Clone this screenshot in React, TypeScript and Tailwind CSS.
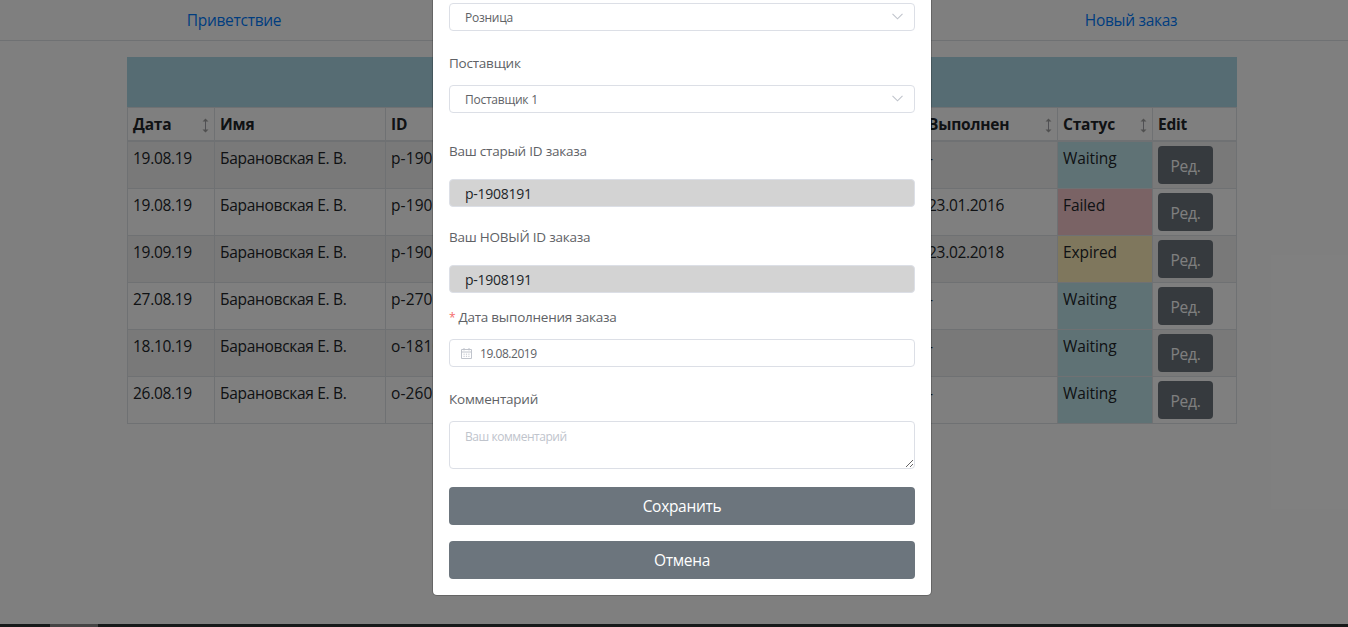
import React from "react";

type Status = "Waiting" | "Failed" | "Expired";

interface Order {
  date: string;
  id: string;
  done: string;
  status: Status;
}

const orders: Order[] = [
  { date: "19.08.19", id: "р-1908191", done: "-", status: "Waiting" },
  { date: "19.08.19", id: "р-1908192", done: "23.01.2016", status: "Failed" },
  { date: "19.09.19", id: "р-1909191", done: "23.02.2018", status: "Expired" },
  { date: "27.08.19", id: "р-2708191", done: "-", status: "Waiting" },
  { date: "18.10.19", id: "о-1810191", done: "-", status: "Waiting" },
  { date: "26.08.19", id: "о-2608191", done: "-", status: "Waiting" },
];

const statusColor: Record<Status, string> = {
  Waiting: "bg-[#bee5eb]",
  Failed: "bg-[#f5c6cb]",
  Expired: "bg-[#ffeeba]",
};

const columns = "grid grid-cols-[87px_171px_537px_135px_95px_84px] border-l border-[#dee2e6]";
const headCell = "flex items-center justify-between border-r border-b-2 border-[#dee2e6] pl-[5px] pr-[5px] font-bold tracking-[-0.2px]";
const cell = "border-r border-b border-[#dee2e6] pl-[5px] pt-1";

function SortIcon() {
  return (
    <svg className="mt-[3px] h-[15px] w-[7px]" viewBox="0 0 7 15" fill="none" stroke="#a0a0a8" strokeWidth="1">
      <path d="M3.5 1v13" />
      <path d="M3.5 .5 6.5 3.5H.5zM3.5 14.5 6.5 11.5H.5z" fill="#a0a0a0" stroke="none" />
    </svg>
  );
}

function OrdersTable() {
  return (
    <div className="mt-4 ml-[127px] w-[1110px]">
      <div className="h-[50px] bg-[#add8e6]" />
      <div className={columns + " h-[35px] border-t"}>
        <div className={headCell}>Дата<SortIcon /></div>
        <div className={headCell}>Имя</div>
        <div className={headCell}>ID</div>
        <div className={headCell}>Выполнен<SortIcon /></div>
        <div className={headCell}>Статус<SortIcon /></div>
        <div className={headCell}>Edit</div>
      </div>
      {orders.map((order, index) => (
        <div key={order.id} className={columns + " h-[47px] " + (index % 2 === 0 ? "bg-[#f2f2f2]" : "bg-white")}>
          <div className={cell}>{order.date}</div>
          <div className={cell}>Барановская Е. В.</div>
          <div className={cell + " tracking-[0.1px]"}>{order.id}</div>
          <div className={cell}>{order.done}</div>
          <div className={cell + " tracking-[-0.1px] " + statusColor[order.status]}>{order.status}</div>
          <div className={cell}>
            <button className="h-[38px] w-[55px] rounded bg-[#6c757d] pt-px text-white">Ред.</button>
          </div>
        </div>
      ))}
    </div>
  );
}

function Select({ value }: { value: string }) {
  return (
    <div className="flex h-7 items-center justify-between rounded border border-[#dcdfe6] pr-[11px] pl-[15px] text-[12px] tracking-[-0.25px] text-[#606266]">
      <span className="pt-px">{value}</span>
      <svg className="mb-px h-[7px] w-[11px]" viewBox="0 0 11 7" fill="none" stroke="#c0c4cc" strokeWidth="1.1">
        <path d="M.5.8 5.5 5.8 10.5.8" />
      </svg>
    </div>
  );
}

function IdField({ value }: { value: string }) {
  return (
    <div className="flex h-7 items-center rounded border border-[#dcdfe6] bg-[#d3d3d3] pt-px pl-[15px] text-[14px] tracking-[-0.25px] text-[#212529]">
      {value}
    </div>
  );
}

const label = "h-8 text-[13.5px] leading-8 tracking-[-0.23px] text-[#606266]";
const action = "h-[38px] w-full rounded bg-[#6c757d] tracking-[-0.3px] text-white";

function CalendarIcon() {
  return (
    <svg className="h-[11px] w-[11px]" viewBox="0 0 11 11" fill="none" stroke="#c0c4cc" strokeWidth="1">
      <path d="M.5 1.5h10v9H.5zM.5 4h10M3 0v2.5M8 0v2.5" />
      <path d="M2.5 6.2h6M2.5 8.3h6" strokeDasharray="1.2 1.2" />
    </svg>
  );
}

function OrderModal() {
  return (
    <div className="absolute top-0 left-[432px] w-[500px] rounded-b-[5px] border-x border-b border-black/20 bg-white bg-clip-padding px-4 pt-[3px] pb-4">
      <Select value="Розница" />
      <div className={label + " mt-4 mb-1.5"}>Поставщик</div>
      <Select value="Поставщик 1" />
      <div className={label + " mt-[22px] mb-3"}>Ваш старый ID заказа</div>
      <IdField value="р-1908191" />
      <div className={label + " mt-3.5 mb-3"}>Ваш НОВЫЙ ID заказа</div>
      <IdField value="р-1908191" />
      <div className={label + " mt-2 mb-1.5"}>
        <span className="mr-[3px] text-[12px] text-[#f56c6c]">*</span>Дата выполнения заказа
      </div>
      <div className="flex h-7 items-center gap-2 rounded border border-[#dcdfe6] pl-[11px] text-[12px] tracking-[-0.45px] text-[#606266]">
        <CalendarIcon />
        <span className="pt-px">19.08.2019</span>
      </div>
      <div className={label + " mt-4 mb-1.5"}>Комментарий</div>
      <textarea
        placeholder="Ваш комментарий"
        className="block h-12 w-full resize rounded border border-[#dcdfe6] px-[15px] py-1.5 text-[12px] leading-[18px] tracking-[-0.45px] placeholder:text-[#c0c4cc]"
      />
      <button className={action + " mt-[18px] block"}>Сохранить</button>
      <button className={action + " mt-4 block"}>Отмена</button>
    </div>
  );
}

export default function App() {
  return (
    <div className="relative flex h-[627px] w-[1348px] flex-col overflow-hidden bg-white font-['Open_Sans','Noto_Sans',sans-serif] text-[15.5px] leading-6 tracking-[-0.3px] text-[#212529]">
      <nav className="flex h-[41px] shrink-0 items-center justify-between border-b border-[#dee2e6] text-[#007bff]">
        <a className="w-[468px] text-center">Приветствие</a>
        <a className="w-[434px] text-center">Новый заказ</a>
      </nav>
      <OrdersTable />
      <div className="absolute inset-0 bg-black/50" />
      <OrderModal />
      <div className="relative mt-auto flex h-[3px] bg-[#161919] pl-[50px]">
        <div className="w-12 bg-[#444444]" />
      </div>
    </div>
  );
}
